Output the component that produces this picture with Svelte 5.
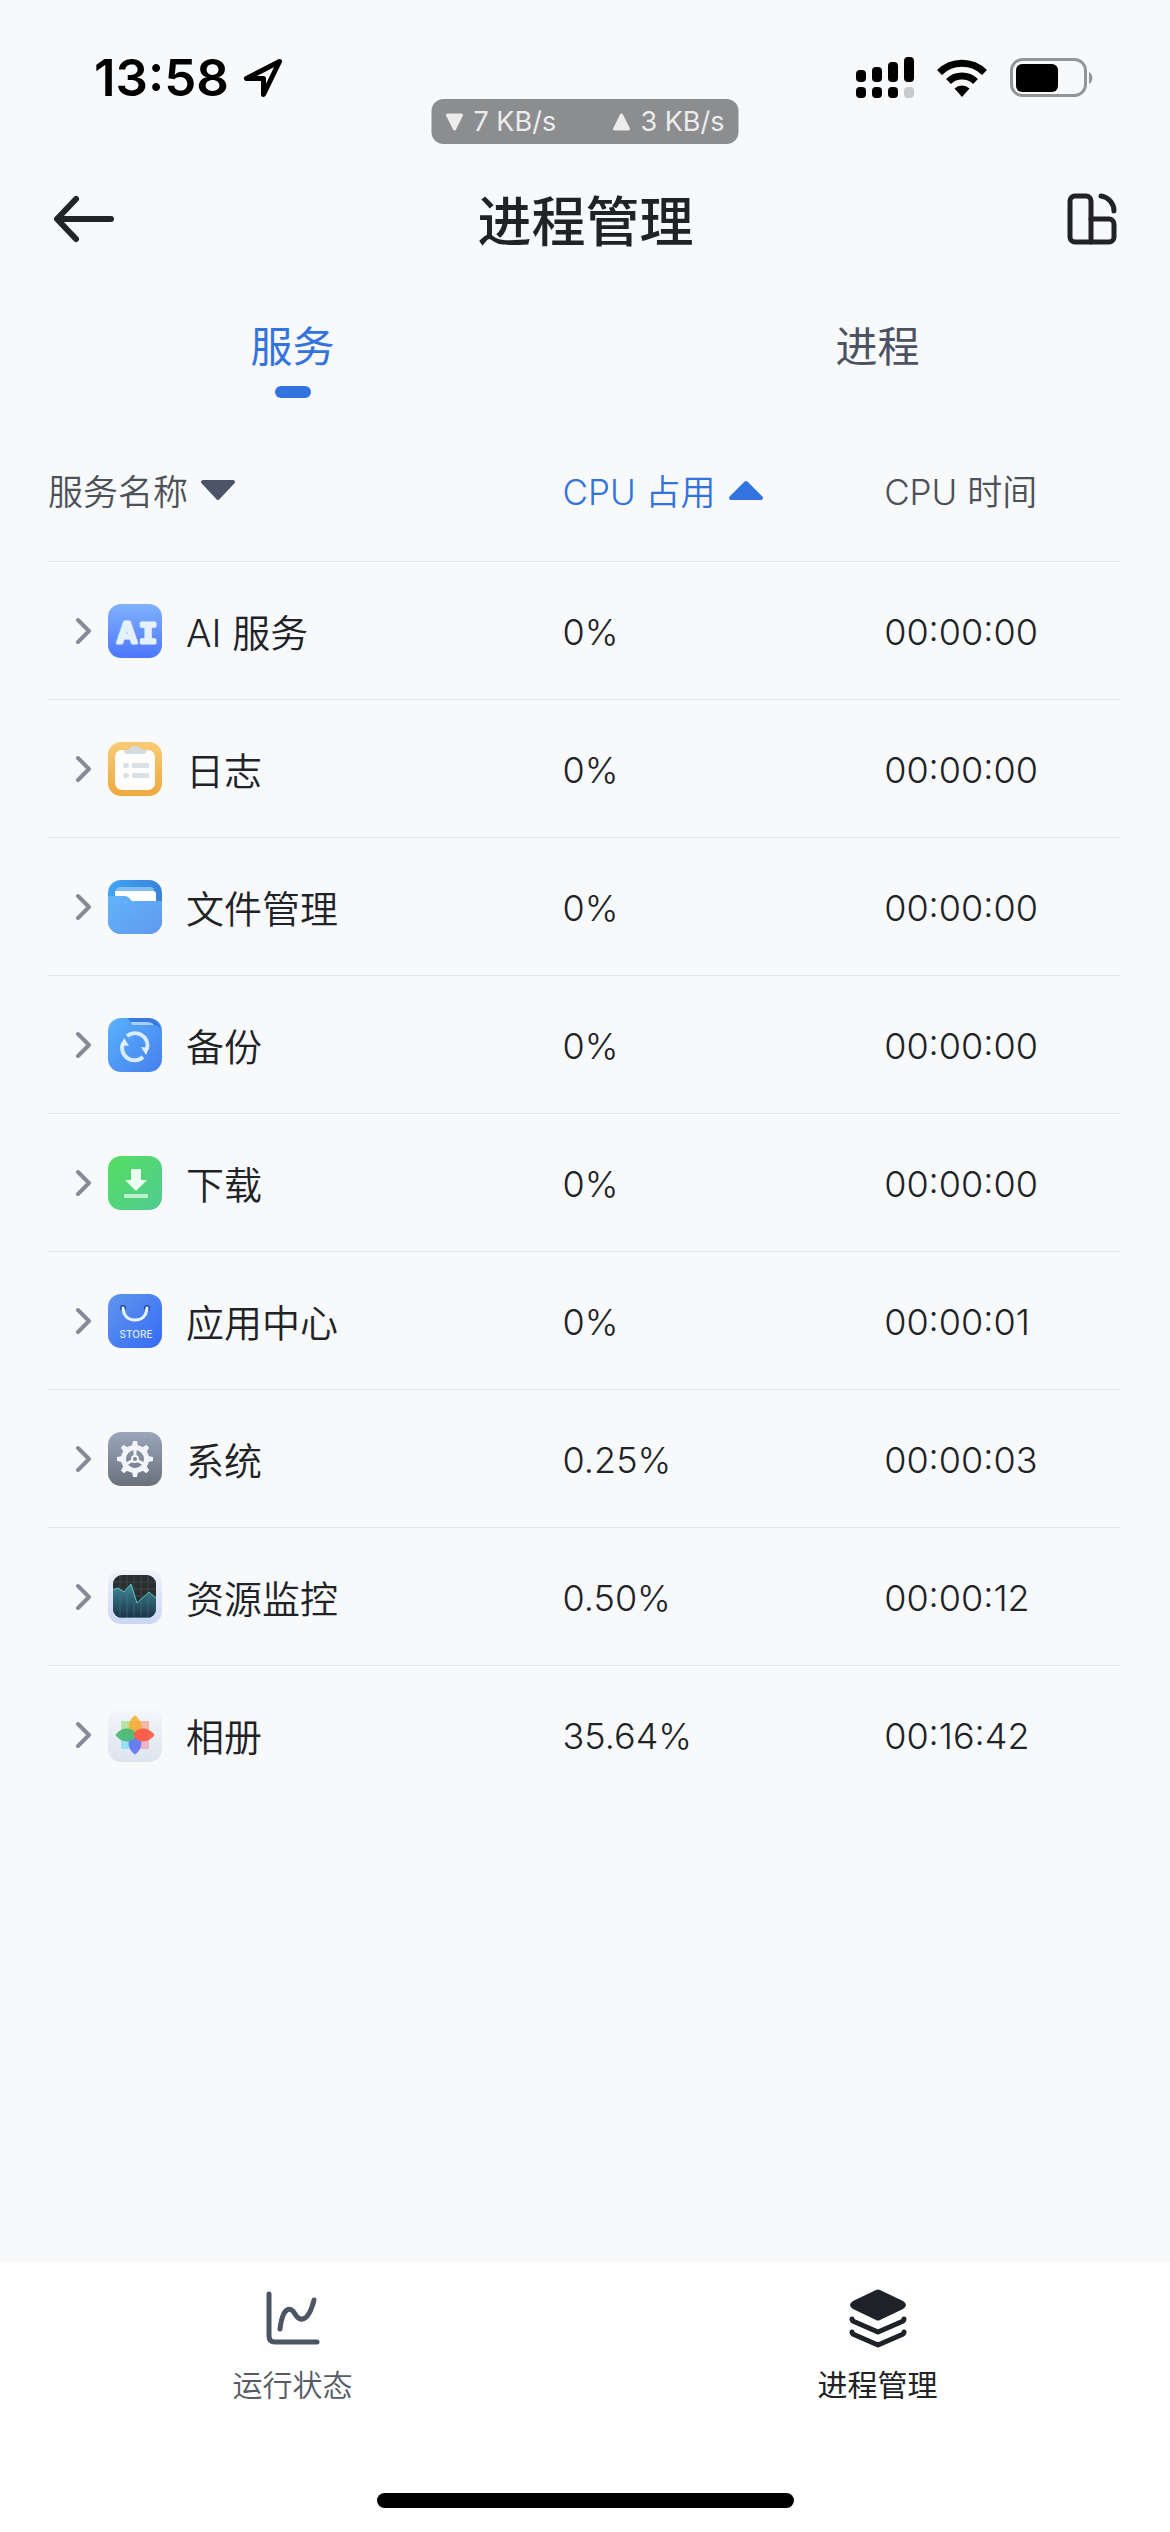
<script>
  const services = [
    { icon: 'ai', name: 'AI 服务', cpu: '0%', time: '00:00:00' },
    { icon: 'log', name: '日志', cpu: '0%', time: '00:00:00' },
    { icon: 'files', name: '文件管理', cpu: '0%', time: '00:00:00' },
    { icon: 'backup', name: '备份', cpu: '0%', time: '00:00:00' },
    { icon: 'download', name: '下载', cpu: '0%', time: '00:00:00' },
    { icon: 'store', name: '应用中心', cpu: '0%', time: '00:00:01' },
    { icon: 'system', name: '系统', cpu: '0.25%', time: '00:00:03' },
    { icon: 'monitor', name: '资源监控', cpu: '0.50%', time: '00:00:12' },
    { icon: 'photos', name: '相册', cpu: '35.64%', time: '00:16:42' }
  ];
  const teeth = [0, 45, 90, 135, 180, 225, 270, 315];
  let tab = $state('services');
</script>

<div class="app">
  <div class="status">
    <div class="clock">
      <span>13:58</span>
      <svg width="40" height="40" viewBox="0 0 40 40" aria-hidden="true">
        <path d="M36.500 3.500 3.500 20.500H20.500V36.500Z" fill="none" stroke="#000" stroke-width="5" stroke-linejoin="round" />
      </svg>
    </div>
    <div class="radios" aria-hidden="true">
      <svg width="58" height="42" viewBox="0 0 58 42">
        <rect x="0" y="13" width="10" height="12" rx="4" />
        <rect x="16" y="10" width="10" height="15" rx="4" />
        <rect x="32" y="5" width="10" height="20" rx="4" />
        <rect x="48" y="0" width="10" height="25" rx="4" />
        <rect x="0" y="30" width="10" height="11" rx="4" />
        <rect x="16" y="30" width="10" height="11" rx="4" />
        <rect x="32" y="30" width="10" height="11" rx="4" />
        <rect x="48" y="30" width="10" height="11" rx="4" fill="#c8c9cb" />
      </svg>
      <svg width="50" height="38" viewBox="0 0 50 38">
        <path d="M2.500 13.500A32 32 0 0 1 47.500 13.500" fill="none" stroke="#000" stroke-width="7" />
        <path d="M11.500 22.500A19.500 19.500 0 0 1 38.500 22.500" fill="none" stroke="#000" stroke-width="7" />
        <path d="M17.500 29.500A11 11 0 0 1 32.500 29.500L25 38Z" />
      </svg>
      <svg width="84" height="40" viewBox="0 0 84 40">
        <rect x="1.500" y="1.500" width="74" height="36" rx="11" fill="none" stroke="#949597" stroke-width="3" />
        <rect x="6" y="6" width="42" height="28" rx="6" />
        <path d="M79 14a7 7 0 0 1 0 12Z" fill="#949597" />
      </svg>
    </div>
    <div class="speed">
      <span>
        <svg width="18" height="18" viewBox="0 0 18 18" aria-hidden="true"><path d="M2 2H16L9 16Z" fill="#ececed" stroke="#ececed" stroke-width="3" stroke-linejoin="round" /></svg>
        7 KB/s
      </span>
      <span>
        <svg width="18" height="18" viewBox="0 0 18 18" aria-hidden="true"><path d="M2 16H16L9 2Z" fill="#ececed" stroke="#ececed" stroke-width="3" stroke-linejoin="round" /></svg>
        3 KB/s
      </span>
    </div>
  </div>

  <header>
    <button class="tool" aria-label="返回">
      <svg width="60" height="50" viewBox="0 0 60 50" fill="none" stroke="#222327" stroke-width="6" stroke-linecap="round" stroke-linejoin="round">
        <path d="M22 5 3 25 22 45M4 25H57" />
      </svg>
    </button>
    <h1>进程管理</h1>
    <button class="tool" aria-label="布局">
      <svg width="50" height="52" viewBox="0 0 50 52" fill="none" stroke="#222327" stroke-width="5" stroke-linecap="round" stroke-linejoin="round">
        <path d="M8 3H19a5 5 0 0 1 5 5V49H8a5 5 0 0 1-5-5V8a5 5 0 0 1 5-5Z" />
        <path d="M24 26H42a5 5 0 0 1 5 5V44a5 5 0 0 1-5 5H24M34 3A15 15 0 0 1 47 18" />
      </svg>
    </button>
  </header>

  <div class="tabs" role="tablist">
    <button role="tab" aria-selected={tab === 'services'} class:active={tab === 'services'} onclick={() => (tab = 'services')}>服务</button>
    <button role="tab" aria-selected={tab === 'processes'} class:active={tab === 'processes'} onclick={() => (tab = 'processes')}>进程</button>
  </div>

  <main>
    <table>
      <thead>
        <tr>
          <th class="col-name">
            <button class="sort">服务名称
              <svg width="36" height="22" viewBox="0 0 36 22" aria-hidden="true"><path d="M3 3H33L18 19Z" fill="#4c5567" stroke="#4c5567" stroke-width="4" stroke-linejoin="round" /></svg>
            </button>
          </th>
          <th class="col-cpu" aria-sort="ascending">
            <button class="sort current">CPU 占用
              <svg width="36" height="22" viewBox="0 0 36 22" aria-hidden="true"><path d="M3 19H33L18 4Z" fill="#3373e0" stroke="#3373e0" stroke-width="4" stroke-linejoin="round" /></svg>
            </button>
          </th>
          <th class="col-time">CPU 时间</th>
        </tr>
      </thead>
      <tbody>
        {#each services as s}
          <tr>
            <td>
              <div class="service">
                <button class="expand" aria-label={'展开 ' + s.name}>
                  <svg width="16" height="28" viewBox="0 0 16 28" fill="none" stroke="#868b98" stroke-width="4" stroke-linecap="round" stroke-linejoin="round"><path d="M3 3 14 14 3 25" /></svg>
                </button>
                <svg class="appicon" width="54" height="54" viewBox="0 0 54 54" aria-hidden="true">
                  {#if s.icon === 'ai'}
                    <linearGradient id="g-ai" x1="0" y1="0" x2="0" y2="1"><stop offset="0" stop-color="#7fb2ff" /><stop offset="1" stop-color="#4c77fc" /></linearGradient>
                    <rect width="54" height="54" rx="13" fill="url(#g-ai)" />
                    <g fill="#e6f1ff" stroke="#e6f1ff" stroke-width="3" stroke-linejoin="round" text-anchor="middle">
                      <text class="ai-a" x="19" y="39">A</text>
                      <text class="ai-i" x="40" y="39">I</text>
                    </g>
                  {:else if s.icon === 'log'}
                    <linearGradient id="g-log" x1="0" y1="0" x2="0" y2="1"><stop offset="0" stop-color="#f8cb75" /><stop offset="1" stop-color="#f0a840" /></linearGradient>
                    <rect width="54" height="54" rx="13" fill="url(#g-log)" />
                    <rect x="7" y="8" width="40" height="40" rx="7" fill="#fefefe" />
                    <path d="M16 8H20Q27 0 34 8H38L39 9Q38 12 35 12H19Q16 12 16 9Z" fill="#d3dce2" />
                    <g fill="#dae1e6"><rect x="15" y="21" width="6" height="5" rx="2" /><rect x="24" y="21" width="17" height="5" rx="1" /><rect x="15" y="31" width="6" height="5" rx="2" /><rect x="24" y="31" width="17" height="5" rx="1" /></g>
                  {:else if s.icon === 'files'}
                    <linearGradient id="g-back" x1="0" y1="0" x2="1" y2="0"><stop offset="0" stop-color="#42a4f5" /><stop offset="1" stop-color="#3983d8" /></linearGradient>
                    <linearGradient id="g-front" x1="0" y1="0" x2="1" y2="1"><stop offset="0" stop-color="#62b4fa" /><stop offset="1" stop-color="#6099ef" /></linearGradient>
                    <rect width="54" height="54" rx="13" fill="url(#g-back)" />
                    <rect x="8" y="7" width="38" height="14" rx="4" fill="#80bdf7" />
                    <path d="M7 11H45Q48 11 48 14V24H7Z" fill="#fdfeff" />
                    <path d="M0 16H17Q20 16 22 19T27 21H54V41A13 13 0 0 1 41 54H13A13 13 0 0 1 0 41Z" fill="url(#g-front)" />
                  {:else if s.icon === 'backup'}
                    <linearGradient id="g-backup" x1="0" y1="0" x2="1" y2="1"><stop offset="0" stop-color="#58b2fc" /><stop offset="1" stop-color="#4680ef" /></linearGradient>
                    <rect width="54" height="54" rx="13" fill="url(#g-backup)" />
                    <path d="M19 0H41Q51 1 53 12Q51 7 44 7H27Q23 7 22 3Z" fill="#397bdd" />
                    <path d="M23 4H38Q44 4 46 7H25Q23 7 23 4Z" fill="#a8cffb" />
                    <g fill="none" stroke="#d9ecff" stroke-width="4"><path d="M19 18A12.500 12.500 0 0 1 39 31" /><path d="M35 39A12.500 12.500 0 0 1 15 25" /></g>
                    <path d="M33 29 41 30 38 37ZM21 28 13 27 16 20Z" fill="#e3f1ff" />
                  {:else if s.icon === 'download'}
                    <linearGradient id="g-down" x1="0" y1="0" x2="1" y2="1"><stop offset="0" stop-color="#56de61" /><stop offset="1" stop-color="#50cb92" /></linearGradient>
                    <rect width="54" height="54" rx="13" fill="url(#g-down)" />
                    <path d="M23 13H33V24H39L28 35 17 24H23Z" fill="#eafff0" />
                    <rect x="16" y="38" width="24" height="4" rx="1" fill="#b9f2cb" />
                  {:else if s.icon === 'store'}
                    <linearGradient id="g-store" x1="0" y1="0" x2="1" y2="1"><stop offset="0" stop-color="#6096ec" /><stop offset="1" stop-color="#366bf7" /></linearGradient>
                    <rect width="54" height="54" rx="13" fill="url(#g-store)" />
                    <g fill="#244b9c"><circle cx="15" cy="14" r="3" /><circle cx="39" cy="14" r="3" /></g>
                    <path d="M15 14Q16 26 27 26T39 14" fill="none" stroke="#e9f3ff" stroke-width="3" stroke-linecap="round" />
                    <text class="store-label" x="28" y="44" text-anchor="middle" fill="#dfe9ff">STORE</text>
                  {:else if s.icon === 'system'}
                    <linearGradient id="g-sys" x1="0" y1="0" x2="0" y2="1"><stop offset="0" stop-color="#9aa6ba" /><stop offset="1" stop-color="#69717c" /></linearGradient>
                    <rect width="54" height="54" rx="13" fill="url(#g-sys)" />
                    {#each teeth as a}
                      <path d="M24 14 25 9H29L30 14Z" fill="#f1f4f8" transform="rotate({a} 27 27)" />
                    {/each}
                    <circle cx="27" cy="27" r="11.500" fill="none" stroke="#f1f4f8" stroke-width="5" />
                    {#each [0, 120, 240] as a}
                      <path d="M27 27V17" stroke="#f1f4f8" stroke-width="3" transform="rotate({a} 27 27)" />
                    {/each}
                    <circle cx="27" cy="27" r="4" fill="#f1f4f8" /><circle cx="27" cy="27" r="2" fill="#7c8593" />
                  {:else if s.icon === 'monitor'}
                    <linearGradient id="g-mon" x1="0" y1="0" x2="0" y2="1"><stop offset="0" stop-color="#eef3fa" /><stop offset="1" stop-color="#ccd7f5" /></linearGradient>
                    <linearGradient id="g-wave" x1="0" y1="0" x2="0" y2="1"><stop offset="0" stop-color="#3e8a98" /><stop offset="1" stop-color="#1d3347" /></linearGradient>
                    <clipPath id="c-mon"><rect x="5" y="5" width="43" height="43" rx="9" /></clipPath>
                    <rect width="54" height="54" rx="13" fill="url(#g-mon)" />
                    <g clip-path="url(#c-mon)">
                      <rect x="5" y="5" width="43" height="43" fill="#292f30" />
                      <path d="M12 5V48M19 5V48M26 5V48M33 5V48M40 5V48M5 12H48M5 19H48M5 26H48" stroke="#3f4745" />
                      <path d="M4 20 10 18 16 22 23 14 29 33 41 22 49 29V48H4Z" fill="url(#g-wave)" stroke="#62c3c5" />
                      <path d="M12 24V48M19 24V48M26 32V48M33 32V48M40 28V48" stroke="#52899b" opacity="0.4" />
                    </g>
                  {:else}
                    <linearGradient id="g-ph" x1="0" y1="0" x2="0" y2="1"><stop offset="0" stop-color="#f5f7fa" /><stop offset="1" stop-color="#dce4ef" /></linearGradient>
                    <rect width="54" height="54" rx="13" fill="url(#g-ph)" />
                    <g opacity="0.750">
                      <rect x="13" y="13" width="14" height="14" fill="#a5df8d" /><rect x="27" y="13" width="14" height="14" fill="#f8a58e" />
                      <rect x="27" y="27" width="14" height="14" fill="#f5a3b9" /><rect x="13" y="27" width="14" height="14" fill="#82dcfa" />
                    </g>
                    <g opacity="0.850">
                      <path d="M27 29C18 24 19 13 27 7.500C35 13 36 24 27 29Z" fill="#f6ad31" />
                      <path d="M27 29C18 24 19 13 27 7.500C35 13 36 24 27 29Z" fill="#5870f5" transform="rotate(180 27 27)" />
                      <path d="M27 29C18 24 19 13 27 7.500C35 13 36 24 27 29Z" fill="#41b56a" transform="rotate(270 27 27)" />
                      <path d="M27 29C18 24 19 13 27 7.500C35 13 36 24 27 29Z" fill="#fb5139" transform="rotate(90 27 27)" />
                    </g>
                  {/if}
                </svg>
                <span>{s.name}</span>
              </div>
            </td>
            <td class="value">{s.cpu}</td>
            <td class="value">{s.time}</td>
          </tr>
        {/each}
      </tbody>
    </table>
  </main>

  <nav>
    <div class="links">
      <a href="#status">
        <svg width="58" height="60" viewBox="0 0 58 60" fill="none" stroke="#4b5564" stroke-width="5" stroke-linecap="round" stroke-linejoin="round" aria-hidden="true">
          <path d="M5 6V48Q5 54 11 54H53M16 41C19 17 27 19 31 26S44 36 50 12" />
        </svg>
        运行状态
      </a>
      <a href="#processes" class="here" aria-current="page">
        <svg width="58" height="60" viewBox="0 0 58 60" fill="none" stroke="#1e2228" stroke-width="5" stroke-linecap="round" stroke-linejoin="round" aria-hidden="true">
          <path d="M27 2Q29 1 31 2L54 13Q60 17 54 21L31 32Q29 33 27 32L4 21Q-2 17 4 13Z" fill="#1e2228" stroke="none" />
          <path d="M3 31 Q3 33 6 34L29 44 52 34Q55 33 55 31M3 44Q3 46 6 47L29 57 52 47Q55 46 55 44" />
        </svg>
        进程管理
      </a>
    </div>
    <div class="home"></div>
  </nav>
</div>

<style>
  :global(body) { margin: 0; background: #f8f9fb; }
  .app {
    min-height: 100vh;
    display: flex;
    flex-direction: column;
    background: #f8f9fb;
    color: #202226;
    font-family: Inter, "Noto Sans CJK SC", sans-serif;
    font-size: 38px;
    font-weight: 350;
  }
  button { border: 0; padding: 0; background: none; font: inherit; color: inherit; cursor: pointer; }
  svg { display: block; flex: none; }
  .status {
    position: relative;
    height: 156px;
    box-sizing: border-box;
    padding: 0 76px 0 94px;
    display: flex;
    justify-content: space-between;
    align-items: center;
    color: #000;
  }
  .clock { display: flex; align-items: center; gap: 14px; font: 600 51px/60px Inter, sans-serif; }
  .radios { display: flex; align-items: center; gap: 23px; }
  .speed {
    position: absolute;
    left: 50%;
    top: 99px;
    transform: translateX(-50%);
    width: 307px;
    height: 45px;
    box-sizing: border-box;
    padding: 0 14px;
    border-radius: 12px;
    display: flex;
    justify-content: space-between;
    align-items: center;
    background: #8c8d8f;
    color: #ececed;
    font: 400 27px/45px Inter, sans-serif;
    white-space: nowrap;
  }
  .speed span { display: flex; align-items: center; gap: 10px; }
  header { height: 126px; padding: 0 53px 0 54px; display: flex; justify-content: space-between; align-items: center; }
  .tool { width: 60px; height: 60px; display: flex; align-items: center; }
  .tool:last-child { justify-content: flex-end; }
  h1 { margin: 0; font: 500 54px/64px "Noto Sans CJK SC", sans-serif; }
  .tabs { display: flex; height: 132px; box-sizing: border-box; padding-top: 32px; align-items: flex-start; }
  .tabs button {
    flex: 1;
    display: flex;
    flex-direction: column;
    align-items: center;
    gap: 12px;
    font: 400 42px/60px "Noto Sans CJK SC", sans-serif;
    color: #4b5262;
  }
  .tabs .active { color: #3373e0; }
  .tabs .active::after { content: ""; width: 36px; height: 12px; border-radius: 6px; background: #3373e0; }
  main { flex: 1; padding: 0 50px 0 48px; }
  table { width: 100%; table-layout: fixed; border-collapse: collapse; }
  .col-name { width: 48%; }
  .col-cpu { width: 30%; }
  th { height: 143px; padding: 4px 0 0; text-align: left; font-size: 35px; font-weight: 300; color: #4d5158; }
  .sort { display: flex; align-items: center; gap: 12px; font-weight: 350; }
  .col-time { font-weight: 350; }
  td { height: 137px; padding: 0; border-top: 1px solid #e3e5e8; }
  .value { height: 135px; padding-top: 2px; font-size: 36px; font-weight: 350; }
  .current { color: #3373e0; }
  .service { display: flex; align-items: center; padding-left: 27px; }
  .expand { width: 33px; height: 54px; display: flex; align-items: center; }
  .appicon { margin-right: 24px; }
  .ai-a { font: 600 28px Inter, sans-serif; }
  .ai-i { font: 700 30px "Liberation Mono", monospace; }
  .store-label { font: 500 10px Inter, sans-serif; }
  nav { height: 270px; background: #fefefe; display: flex; flex-direction: column; justify-content: space-between; align-items: center; }
  .links { width: 100%; display: flex; padding-top: 26px; }
  .links a {
    flex: 1;
    display: flex;
    flex-direction: column;
    align-items: center;
    gap: 15px;
    color: #565b66;
    font-size: 30px;
    line-height: 44px;
    text-decoration: none;
  }
  .links .here { color: #202226; font-weight: 400; }
  .home { width: 417px; height: 15px; margin-bottom: 24px; border-radius: 8px; background: #000; }
</style>
